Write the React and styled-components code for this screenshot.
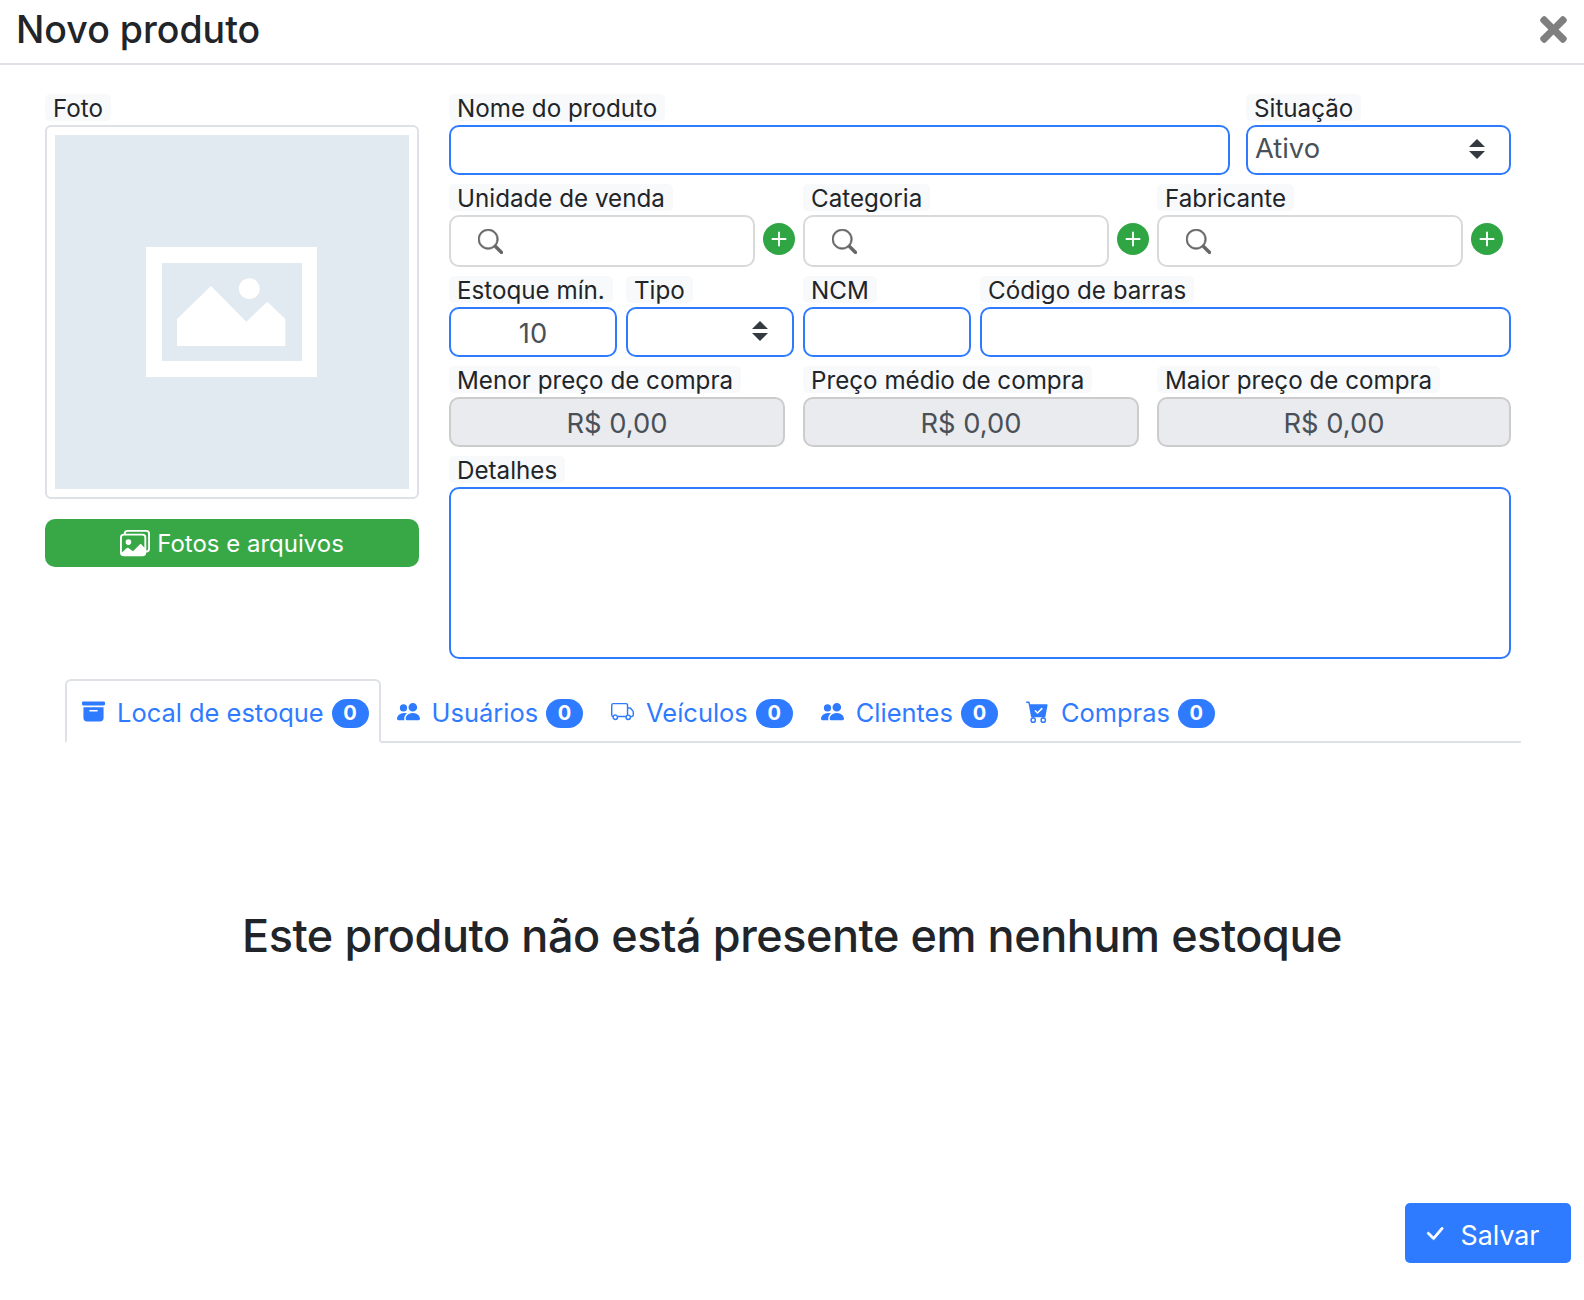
import React from "react";
import styled, { createGlobalStyle } from "styled-components";
import { BsArchiveFill, BsCartCheckFill, BsCheckLg, BsImages, BsPeopleFill, BsPlus, BsSearch, BsTruck } from "react-icons/bs";
import { FaTimes } from "react-icons/fa";

const GlobalStyle = createGlobalStyle`
  html, body { margin: 0; padding: 0; background: #fff; }
  body { font-family: Inter, "Liberation Sans", sans-serif; color: #212529; }
  * { box-sizing: border-box; }
`;

const Page = styled.div`
  width: 1584px;
  height: 1300px;
  display: flex;
  flex-direction: column;
  overflow: hidden;
`;

const Header = styled.header`
  height: 65px;
  border-bottom: 2px solid #dee2e6;
  padding: 0 16px 4px;
  display: flex;
  align-items: center;
  justify-content: space-between;
`;

const Title = styled.h1`
  margin: 0;
  font-size: 37.5px;
  font-weight: 500;
  line-height: 60px;
`;

const Close = styled.span`
  display: flex;
  color: #7f7f7f;
  font-size: 39px;
  margin-right: -5px;
`;

const Form = styled.div`
  display: flex;
  gap: 30px;
  padding: 29px 73px 0 45px;
`;

const PhotoColumn = styled.div`
  width: 374px;
  flex: none;
`;

const FieldsColumn = styled.div`
  flex: 1;
  display: flex;
  flex-direction: column;
  gap: 9px;
`;

const Label = styled.label`
  display: block;
  width: fit-content;
  height: 27px;
  margin-bottom: 4px;
  padding: 0 8px;
  background: #f8f9fa;
  border-radius: 5px;
  font-size: 24.2px;
  line-height: 29px;
  white-space: nowrap;
`;

const PhotoBox = styled.div`
  height: 374px;
  padding: 8px;
  border: 2px solid #dee2e6;
  border-radius: 6px;
  margin-bottom: 20px;
`;

const PhotoPlaceholder = styled.div`
  height: 100%;
  padding-right: 1px;
  background: #e1e9f1;
  display: flex;
  align-items: center;
  justify-content: center;
`;

const GreenButton = styled.button`
  width: 100%;
  height: 48px;
  border: none;
  border-radius: 10px;
  background: #38a847;
  color: #fff;
  font: 400 24px Inter, sans-serif;
  display: flex;
  align-items: center;
  justify-content: center;
  gap: 7px;
  svg { font-size: 30px; }
`;

const Row = styled.div`
  display: grid;
  grid-template-columns: ${(p) => p.$cols};
  gap: ${(p) => p.$gap}px;
`;

const Control = styled.div`
  height: 50px;
  border: 2px solid #2f7bff;
  border-radius: 10px;
  background: #fff;
  color: #495057;
  font-size: 27.3px;
  display: flex;
  align-items: center;
  justify-content: ${(p) => (p.$center ? "center" : "flex-start")};
  padding: ${(p) => (p.$center ? "3px 8px 0" : "0 7px 3px")};
`;

const SelectControl = styled(Control)`
  justify-content: ${(p) => (p.$empty ? "flex-end" : "space-between")};
  padding-right: 23px;
`;

const ReadOnly = styled(Control)`
  border-color: #cccccc;
  background: #eaebee;
  justify-content: center;
  padding: 3px 8px 0;
`;

const Details = styled(Control)`
  height: 172px;
`;

const SearchRow = styled.div`
  display: flex;
  align-items: center;
  gap: 8px;
  height: 52px;
`;

const SearchBox = styled.div`
  width: 306px;
  height: 52px;
  border: 2px solid #d9d9d9;
  border-radius: 10px;
  padding-left: 27px;
  display: flex;
  align-items: center;
  color: #666;
  font-size: 25px;
  svg { stroke: currentColor; stroke-width: 0.35; }
`;

const AddButton = styled.span`
  width: 32px;
  height: 32px;
  margin-top: -5px;
  border-radius: 50%;
  background: #2fa544;
  color: #fff;
  font-size: 30px;
  display: flex;
  align-items: center;
  justify-content: center;
`;

const Tabs = styled.nav`
  display: flex;
  align-items: flex-end;
  height: 65px;
  margin: 19px 63px 0 65px;
  border-bottom: 2px solid #dee2e6;
`;

const Tab = styled.div`
  height: 64px;
  margin-bottom: -2px;
  display: flex;
  align-items: center;
  gap: 8px;
  padding: 2px 10px 0 ${(p) => (p.$active ? 15 : 14)}px;
  color: #2f7bff;
  font-size: 25.45px;
  border: 2px solid ${(p) => (p.$active ? "#dee2e6" : "transparent")};
  border-bottom: 2px solid ${(p) => (p.$active ? "#fff" : "transparent")};
  border-radius: 6px 6px 0 0;
  background: ${(p) => (p.$active ? "#fff" : "transparent")};
  white-space: nowrap;
  svg { font-size: 23px; margin-top: -2px; margin-right: 4px; }
`;

const Badge = styled.span`
  width: 37px;
  height: 29px;
  margin-top: 2px;
  border-radius: 15px;
  background: #2f7bff;
  color: #fff;
  font-size: 20px;
  font-weight: 700;
  display: flex;
  align-items: center;
  justify-content: center;
`;

const TabBody = styled.div`
  flex: 1;
  display: flex;
  flex-direction: column;
  padding: 163px 16px 0;
`;

const Empty = styled.h2`
  margin: 0;
  text-align: center;
  font-size: 45px;
  font-weight: 500;
  letter-spacing: -0.45px;
  line-height: 60px;
`;

const SaveBar = styled.div`
  margin-top: auto;
  margin-bottom: 37px;
  display: flex;
  justify-content: flex-end;
  margin-right: -3px;
`;

const SaveButton = styled.button`
  width: 166px;
  height: 60px;
  border: none;
  border-radius: 5px;
  padding: 4px 14px 0 0;
  background: #2f7bff;
  color: #fff;
  font: 400 26.8px Inter, sans-serif;
  display: flex;
  align-items: center;
  justify-content: center;
  gap: 15px;
  svg { font-size: 23px; stroke: currentColor; stroke-width: 0.6; margin-top: -4px; }
`;

const Chevrons = () => (
  <svg width="18" height="20" viewBox="0 0 18 20" fill="#343a40">
    <path d="M9 0l8 8H1zM9 20l-8-8h16z" />
  </svg>
);

const Placeholder = () => (
  <svg width="171" height="130" viewBox="0 0 171 130">
    <path fill="#fff" fillRule="evenodd" d="M0 0h171v130H0zM16 16v98h140V16z" />
    <circle cx="103.300" cy="41.700" r="10.500" fill="#fff" />
    <path fill="#fff" d="M31 72l34-33 35.300 35.700 21-20 18 17.300v27H31z" />
  </svg>
);

const Field = ({ label, children }) => (
  <div>
    <Label>{label}</Label>
    {children}
  </div>
);

const SearchField = ({ label }) => (
  <Field label={label}>
    <SearchRow>
      <SearchBox>
        <BsSearch />
      </SearchBox>
      <AddButton>
        <BsPlus />
      </AddButton>
    </SearchRow>
  </Field>
);

const tabs = [
  { name: "Local de estoque", Icon: BsArchiveFill, active: true },
  { name: "Usuários", Icon: BsPeopleFill },
  { name: "Veículos", Icon: BsTruck },
  { name: "Clientes", Icon: BsPeopleFill },
  { name: "Compras", Icon: BsCartCheckFill },
];

const App = () => {
  return (
    <Page>
      <GlobalStyle />
      <Header>
        <Title>Novo produto</Title>
        <Close>
          <FaTimes />
        </Close>
      </Header>
      <Form>
        <PhotoColumn>
          <Label>Foto</Label>
          <PhotoBox>
            <PhotoPlaceholder>
              <Placeholder />
            </PhotoPlaceholder>
          </PhotoBox>
          <GreenButton>
            <BsImages />
            Fotos e arquivos
          </GreenButton>
        </PhotoColumn>
        <FieldsColumn>
          <Row $cols="781px 265px" $gap={16}>
            <Field label="Nome do produto">
              <Control />
            </Field>
            <Field label="Situação">
              <SelectControl>
                Ativo
                <Chevrons />
              </SelectControl>
            </Field>
          </Row>
          <Row $cols="repeat(3, 354px)" $gap={0}>
            <SearchField label="Unidade de venda" />
            <SearchField label="Categoria" />
            <SearchField label="Fabricante" />
          </Row>
          <Row $cols="168px 168px 168px 1fr" $gap={9}>
            <Field label="Estoque mín.">
              <Control $center>10</Control>
            </Field>
            <Field label="Tipo">
              <SelectControl $empty>
                <Chevrons />
              </SelectControl>
            </Field>
            <Field label="NCM">
              <Control />
            </Field>
            <Field label="Código de barras">
              <Control />
            </Field>
          </Row>
          <Row $cols="336px 336px 354px" $gap={18}>
            <Field label="Menor preço de compra">
              <ReadOnly>R$ 0,00</ReadOnly>
            </Field>
            <Field label="Preço médio de compra">
              <ReadOnly>R$ 0,00</ReadOnly>
            </Field>
            <Field label="Maior preço de compra">
              <ReadOnly>R$ 0,00</ReadOnly>
            </Field>
          </Row>
          <Field label="Detalhes">
            <Details />
          </Field>
        </FieldsColumn>
      </Form>
      <Tabs>
        {tabs.map(({ name, Icon, active }) => (
          <Tab key={name} $active={active}>
            <Icon />
            {name}
            <Badge>0</Badge>
          </Tab>
        ))}
      </Tabs>
      <TabBody>
        <Empty>Este produto não está presente em nenhum estoque</Empty>
        <SaveBar>
          <SaveButton>
            <BsCheckLg />
            Salvar
          </SaveButton>
        </SaveBar>
      </TabBody>
    </Page>
  );
};

export default App;
